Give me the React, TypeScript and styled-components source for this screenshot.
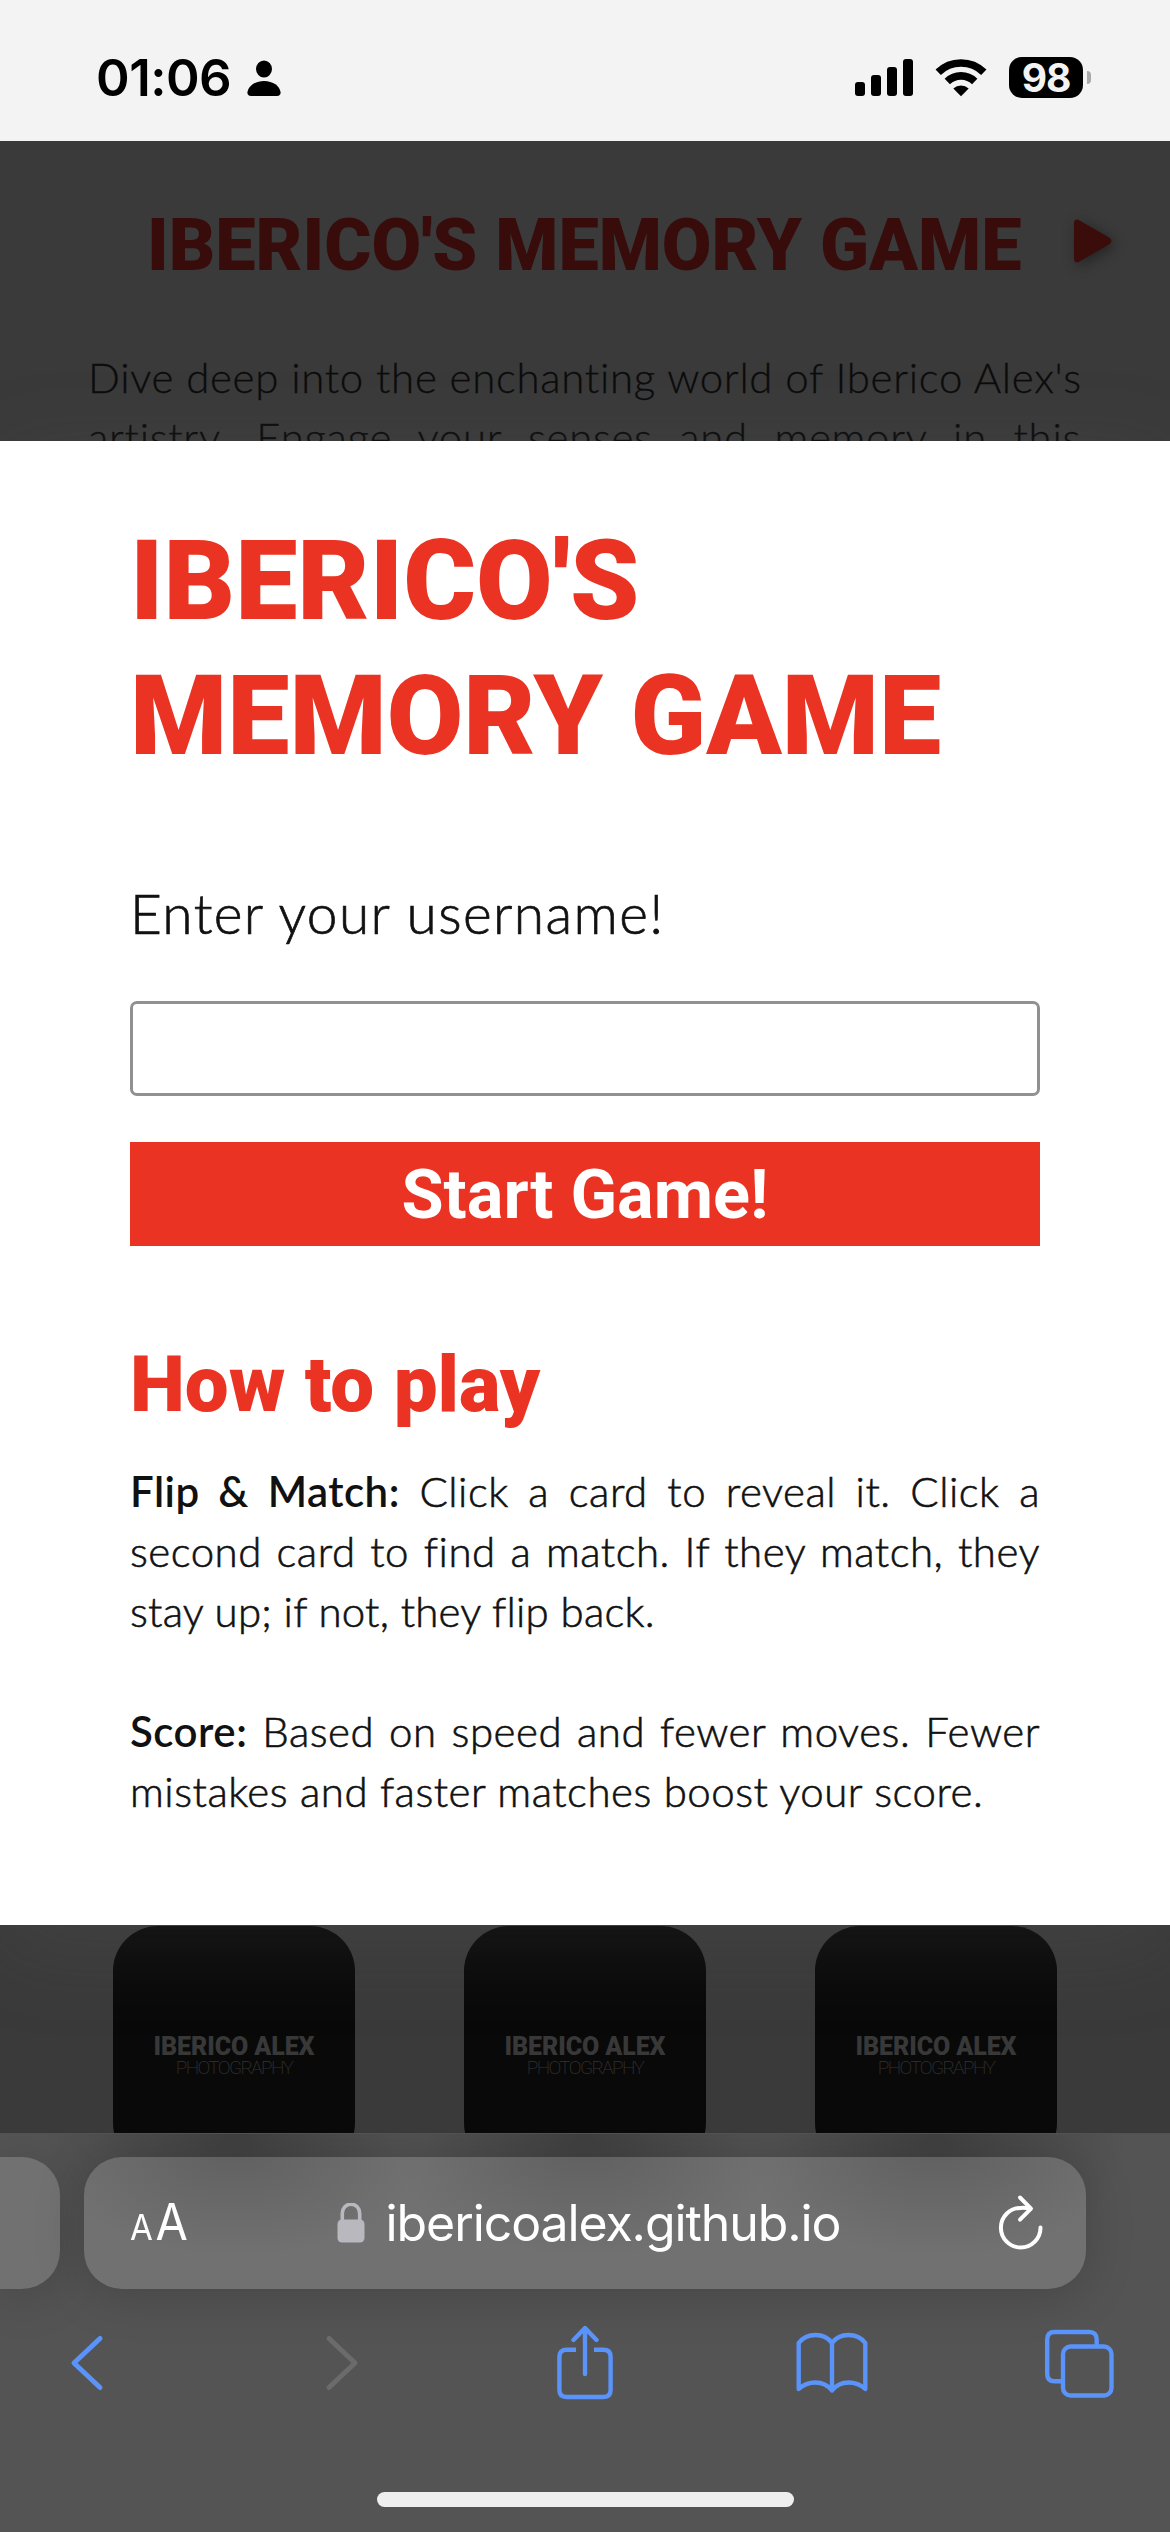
import React from "react";
import styled, { createGlobalStyle } from "styled-components";

const red = "#eb3323";
const blue = "#5a93fa";
const heading = `Roboto, "Liberation Sans", sans-serif`;
const body = `Lato, "Open Sans", sans-serif`;
const system = `Inter, "Liberation Sans", sans-serif`;

const GlobalStyle = createGlobalStyle`
  * { box-sizing: border-box; }
  body { margin: 0; background: #f3f3f3; }
  h1, h2, p { margin: 0; }
`;

const Phone = styled.div`
  display: flex;
  flex-direction: column;
  width: 1170px;
  height: 2532px;
  overflow: hidden;
`;

/* ---------- status bar ---------- */

const StatusBar = styled.header`
  display: flex;
  justify-content: space-between;
  flex: none;
  height: 141px;
  padding: 57px 79px 0 96px;
  background: #f3f3f3;
  color: #000;
  font-family: ${system};
`;

const StatusGroup = styled.div<{ $gap: number }>`
  display: flex;
  align-items: flex-start;
  height: 41px;
  gap: ${(p) => p.$gap}px;
`;

const Clock = styled.span`
  width: 136px;
  font-size: 51px;
  font-weight: 600;
  line-height: 42px;
  letter-spacing: -0.5px;
  white-space: nowrap;
`;

const Battery = styled.div`
  display: flex;
  align-items: center;
  gap: 4px;
  height: 41px;
`;

const BatteryBody = styled.div`
  width: 74px;
  height: 41px;
  border-radius: 13px;
  background: #000;
  color: #f3f3f3;
  font-size: 39px;
  font-weight: 700;
  line-height: 41px;
  letter-spacing: -1px;
  text-align: center;
`;

const BatteryCap = styled.div`
  width: 4px;
  height: 13px;
  border-radius: 0 5px 5px 0;
  background: #a9a9a9;
`;

/* ---------- page ---------- */

const Viewport = styled.main`
  display: grid;
  flex: none;
  height: 1992px;
  overflow: hidden;
  > * { grid-area: 1 / 1; }
`;

const Page = styled.div`
  display: flex;
  flex-direction: column;
  justify-content: space-between;
  height: 1992px;
  background: #3a3a3a;
`;

const Intro = styled.section`
  padding: 60px 58px 0 88px;
`;

const PageHead = styled.div`
  display: flex;
  align-items: center;
  justify-content: space-between;
  height: 90px;
  padding-left: 59px;
`;

const PageTitle = styled.h1`
  font: 900 72px/90px ${heading};
  color: #380c0b;
  white-space: nowrap;
`;

const PlayIcon = styled.svg`
  display: block;
  margin-top: -10px;
  filter: drop-shadow(3px 3px 7px rgba(0, 0, 0, 0.4));
`;

const IntroLine = styled.p`
  width: 993px;
  font: 300 42px/60px ${body};
  letter-spacing: 0.7px;
  color: #0c0c0c;
  -webkit-text-stroke: 0.3px #0c0c0c;
  text-align-last: justify;
  white-space: nowrap;
`;

const IntroText = styled.div`
  margin-top: 56px;
`;

const CardRow = styled.section`
  display: flex;
  gap: 109px;
  height: 207px;
  padding-left: 113px;
`;

const Card = styled.div`
  display: flex;
  flex-direction: column;
  align-items: center;
  flex: none;
  width: 242px;
  height: 242px;
  padding-top: 111px;
  border-radius: 45px;
  background: #090909;
  white-space: nowrap;
`;

const CardBrand = styled.span`
  font: 900 25px/20px ${heading};
  letter-spacing: -0.1px;
  color: #383838;
`;

const CardTag = styled.span`
  margin-top: 3px;
  font: 200 19px/16px ${heading};
  letter-spacing: -1.6px;
  color: #323232;
`;

/* ---------- dialog ---------- */

const Overlay = styled.div`
  padding-top: 300px;
`;

const Dialog = styled.section`
  display: flex;
  flex-direction: column;
  height: 1484px;
  padding: 73px 130px 0;
  background: #fff;
  box-shadow: rgba(100, 100, 111, 0.2) 0 21px 87px 0;
`;

const DialogTitle = styled.h1`
  font: 900 111px/135px ${heading};
  color: ${red};
`;

const UserLabel = styled.label`
  margin-top: 99px;
  font: 300 55px/60px ${body};
  letter-spacing: 1.4px;
  color: #111;
  -webkit-text-stroke: 0.7px #111;
`;

const UserInput = styled.input`
  height: 95px;
  margin-top: 58px;
  padding: 0 20px;
  border: 3px solid #919191;
  border-radius: 7px;
  background: #fff;
  font: 300 48px ${body};
  outline: none;
`;

const StartButton = styled.button`
  height: 104px;
  margin-top: 46px;
  padding: 0;
  border: 0;
  background: ${red};
  color: #fff;
  font: 700 68.5px/105px ${heading};
`;

const SubTitle = styled.h2`
  margin-top: 94px;
  font: 900 78px/90px ${heading};
  color: ${red};
`;

const Rule = styled.div<{ $top: number }>`
  margin-top: ${(p) => p.$top}px;
`;

const RuleLine = styled.p<{ $justify?: boolean; $tracking?: number }>`
  font: 300 42px/60px ${body};
  letter-spacing: ${(p) => p.$tracking ?? 0.5}px;
  color: #111;
  -webkit-text-stroke: 0.6px #111;
  text-align-last: ${(p) => (p.$justify ? "justify" : "left")};
  white-space: nowrap;
  b { font-weight: 600; -webkit-text-stroke: 0; }
`;

/* ---------- browser chrome ---------- */

const Chrome = styled.footer`
  display: flex;
  flex-direction: column;
  flex: none;
  height: 399px;
  border-top: 1px solid #515151;
  overflow: hidden;
  background:
    radial-gradient(ellipse 190px 150px at 235px 0, rgba(50, 50, 50, 0.6), transparent),
    radial-gradient(ellipse 190px 150px at 585px 0, rgba(50, 50, 50, 0.6), transparent),
    radial-gradient(ellipse 190px 150px at 936px 0, rgba(50, 50, 50, 0.6), transparent),
    #545454;
`;

const TabStrip = styled.div`
  display: flex;
  gap: 24px;
  flex: none;
  padding-top: 23px;
`;

const tabSurface = `
  height: 132px;
  background:
    radial-gradient(ellipse 190px 110px at 151px -10px, rgba(70, 70, 70, 0.4), transparent),
    radial-gradient(ellipse 190px 110px at 501px -10px, rgba(70, 70, 70, 0.4), transparent),
    radial-gradient(ellipse 190px 110px at 852px -10px, rgba(70, 70, 70, 0.4), transparent),
    #717171;
  box-shadow: 0 6px 50px rgba(0, 0, 0, 0.18);
`;

const PreviousTab = styled.div`
  ${tabSurface}
  width: 60px;
  border-radius: 0 38px 38px 0;
  background: #717171;
`;

const AddressBar = styled.div`
  ${tabSurface}
  display: grid;
  grid-template-columns: 200px 1fr 200px;
  align-items: center;
  width: 1002px;
  padding: 0 42px 0 46px;
  border-radius: 38px;
  color: #fff;
  font-family: ${system};
`;

const TextSize = styled.span`
  display: flex;
  align-items: baseline;
  gap: 3px;
  padding-top: 3px;
  transform: scaleX(0.92);
  transform-origin: left;
`;

const Letter = styled.span<{ $size: number }>`
  font-size: ${(p) => p.$size}px;
  font-weight: 430;
  line-height: 60px;
`;

const Site = styled.span`
  display: flex;
  align-items: center;
  justify-content: center;
  gap: 21px;
  padding-left: 3px;
  font-size: 50px;
  line-height: 60px;
  letter-spacing: -1.1px;
  white-space: nowrap;
`;

const ReloadSlot = styled.span`
  display: flex;
  justify-content: flex-end;
  margin-bottom: 3px;
`;

const Toolbar = styled.nav`
  display: flex;
  justify-content: space-between;
  align-items: center;
  flex: none;
  height: 76px;
  margin-top: 36px;
  padding: 0 54px 0 50px;
`;

const ToolSlot = styled.span<{ $shift?: number }>`
  display: flex;
  justify-content: center;
  width: 74px;
  padding-left: ${(p) => p.$shift ?? 0}px;
`;

const HomeIndicator = styled.div`
  flex: none;
  width: 417px;
  height: 15px;
  margin: 91px auto 0;
  border-radius: 8px;
  background: #efefef;
`;

/* ---------- icons ---------- */

const PersonIcon = () => (
  <svg width="34" height="40" viewBox="0 0 34 40">
    <ellipse cx="17" cy="12" rx="8" ry="8.6" />
    <path d="M4 39C1.500 39 .3 37.700.4 35.600C1 29 8 24 17 24S33 29 33.600 35.600C33.700 37.700 32.500 39 30 39Z" />
  </svg>
);

const SignalIcon = () => (
  <svg width="58" height="40" viewBox="0 0 58 40">
    <rect x="0" y="25" width="10" height="14" rx="3" />
    <rect x="16" y="18" width="10" height="21" rx="3" />
    <rect x="32" y="10" width="10" height="29" rx="3" />
    <rect x="48" y="2" width="10" height="37" rx="3" />
  </svg>
);

const WifiIcon = () => (
  <svg width="52" height="40" viewBox="0 0 52 40">
    <g fill="none" stroke="#000" strokeWidth="7.600">
      <path d="M3.200 15.300A32.600 32.600 0 0 1 48.800 15.300" />
      <path d="M12.300 24.500A19.600 19.600 0 0 1 39.700 24.500" />
    </g>
    <path d="M26 39.200L18.300 31.400A11.500 11.500 0 0 1 33.700 31.400Z" />
  </svg>
);

const LockIcon = () => (
  <svg width="28" height="40" viewBox="0 0 28 40">
    <rect x="0.500" y="16.500" width="27" height="23" rx="4.500" fill="#b9b8be" />
    <path d="M5.300 18V10.200a8.700 9 0 0 1 17.400 0V18" fill="none" stroke="#b9b8be" strokeWidth="3.600" />
  </svg>
);

const ReloadIcon = () => (
  <svg width="46" height="56" viewBox="0 0 46 56" fill="none" stroke="#fff" strokeWidth="4" strokeLinecap="round" strokeLinejoin="round">
    <path d="M42.500 33.500A19.800 19.800 0 1 1 23 13.900C26 13.700 29 14 32 14.400" />
    <path d="M22 3.500L33 14.600L22 25.700" />
  </svg>
);

const ChevronIcon = ({ color, forward }: { color: string; forward?: boolean }) => (
  <svg width="36" height="60" viewBox="0 0 36 60" fill="none" stroke={color} strokeWidth="5" strokeLinecap="round" strokeLinejoin="round">
    <path d={forward ? "M5 5.500L31 30L5 54.500" : "M31 5.500L5 30L31 54.500"} />
  </svg>
);

const ShareIcon = () => (
  <svg width="58" height="76" viewBox="0 0 58 76" fill="none" stroke={blue} strokeWidth="4.400" strokeLinecap="round" strokeLinejoin="round">
    <path d="M20 24.700H10.500Q3.400 24.700 3.400 31.800V65Q3.400 72 10.500 72H47.500Q54.600 72 54.600 65V31.800Q54.600 24.700 47.500 24.700H38" strokeLinecap="butt" />
    <path d="M29 49V3.500M17.500 15L29 3L40.500 15" />
  </svg>
);

const BookIcon = () => (
  <svg width="72" height="64" viewBox="0 0 72 64" fill="none" stroke={blue} strokeWidth="4.400" strokeLinecap="round" strokeLinejoin="round">
    <path d="M36 12C32 6.500 26.500 4 19.500 4S6.500 7 2.700 12V58C7 54 12.500 51.500 19.500 51.500S32 54.500 36 59.500C40 54.500 45.500 51.500 52.500 51.500S65 54 69.300 58V12C65.500 7 59.500 4 52.500 4S40 6.500 36 12ZM36 12V59.500" />
  </svg>
);

const TabsIcon = () => (
  <svg width="70" height="70" viewBox="0 0 70 70" fill="none" stroke={blue} strokeWidth="4.400">
    <path d="M52.700 17V11.500Q52.700 4 45.200 4H10.500Q3.200 4 3.200 11.500V46Q3.200 53.300 10.500 53.300H18" />
    <rect x="19" y="18.500" width="48.500" height="49" rx="7.500" />
  </svg>
);

const cards = [1, 2, 3];

export default function App() {
  return (
    <Phone>
      <GlobalStyle />
      <StatusBar>
        <StatusGroup $gap={15}>
          <Clock>01:06</Clock>
          <PersonIcon />
        </StatusGroup>
        <StatusGroup $gap={22}>
          <SignalIcon />
          <WifiIcon />
          <Battery>
            <BatteryBody>98</BatteryBody>
            <BatteryCap />
          </Battery>
        </StatusGroup>
      </StatusBar>

      <Viewport>
        <Page>
          <Intro>
            <PageHead>
              <PageTitle>IBERICO'S MEMORY GAME</PageTitle>
              <PlayIcon width="38" height="44" viewBox="0 0 38 44">
                <path d="M0 5Q0-1.500 5.500 1.500L35 18.500Q40 22 35 25.500L5.500 42.500Q0 45.500 0 39Z" fill="#3a0c0a" />
              </PlayIcon>
            </PageHead>
            <IntroText>
              <IntroLine>Dive deep into the enchanting world of Iberico Alex's</IntroLine>
              <IntroLine>artistry. Engage your senses and memory in this</IntroLine>
            </IntroText>
          </Intro>
          <CardRow>
            {cards.map((id) => (
              <Card key={id}>
                <CardBrand>IBERICO ALEX</CardBrand>
                <CardTag>PHOTOGRAPHY</CardTag>
              </Card>
            ))}
          </CardRow>
        </Page>
        <Overlay>
          <Dialog>
            <DialogTitle>IBERICO'S MEMORY GAME</DialogTitle>
            <UserLabel htmlFor="username">Enter your username!</UserLabel>
            <UserInput id="username" type="text" />
            <StartButton>Start Game!</StartButton>
            <SubTitle>How to play</SubTitle>
            <Rule $top={31}>
              <RuleLine $justify><b>Flip &amp; Match:</b> Click a card to reveal it. Click a</RuleLine>
              <RuleLine $justify>second card to find a match. If they match, they</RuleLine>
              <RuleLine $tracking={0.2}>stay up; if not, they flip back.</RuleLine>
            </Rule>
            <Rule $top={60}>
              <RuleLine $justify><b>Score:</b> Based on speed and fewer moves. Fewer</RuleLine>
              <RuleLine>mistakes and faster matches boost your score.</RuleLine>
            </Rule>
          </Dialog>
        </Overlay>
      </Viewport>

      <Chrome>
        <TabStrip>
          <PreviousTab />
          <AddressBar>
            <TextSize>
              <Letter $size={36}>A</Letter>
              <Letter $size={51}>A</Letter>
            </TextSize>
            <Site>
              <LockIcon />
              ibericoalex.github.io
            </Site>
            <ReloadSlot>
              <ReloadIcon />
            </ReloadSlot>
          </AddressBar>
        </TabStrip>
        <Toolbar>
          <ToolSlot><ChevronIcon color={blue} /></ToolSlot>
          <ToolSlot $shift={13}><ChevronIcon color="#6b6b6b" forward /></ToolSlot>
          <ToolSlot $shift={4}><ShareIcon /></ToolSlot>
          <ToolSlot $shift={2}><BookIcon /></ToolSlot>
          <ToolSlot><TabsIcon /></ToolSlot>
        </Toolbar>
        <HomeIndicator />
      </Chrome>
    </Phone>
  );
}
